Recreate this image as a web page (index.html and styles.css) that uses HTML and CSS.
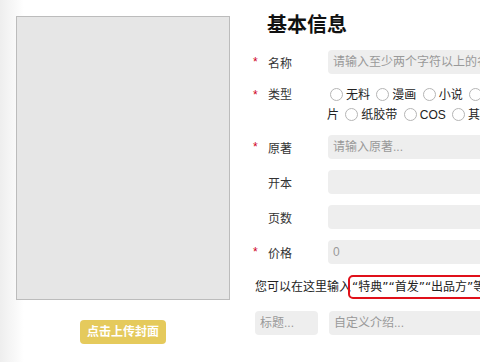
FILE: index.html
```html
<!DOCTYPE html>
<html lang="zh-CN">
<head>
    <meta charset="UTF-8">
    <meta name="viewport" content="width=device-width, initial-scale=1.0">
    <title>基本信息</title>
    <link rel="stylesheet" href="styles.css">
</head>
<body>

    <div class="page">
        <div class="cover-col">
            <div class="cover"></div>
            <div class="upload-btn">点击上传封面</div>
        </div>

        <div class="info">
            <h1 class="title">基本信息</h1>

            <div class="row">
                <span class="star">*</span>
                <span class="label">名称</span>
                <input class="field" type="text" placeholder="请输入至少两个字符以上的名称">
            </div>

            <div class="row row-types">
                <span class="star">*</span>
                <span class="label">类型</span>
                <div class="types">
                    <label><input type="radio" name="type">无料</label>
                    <label><input type="radio" name="type">漫画</label>
                    <label><input type="radio" name="type">小说</label>
                    <label><input type="radio" name="type">画集</label>
                    <label><input type="radio" name="type">明信片</label>
                    <label><input type="radio" name="type">纸胶带</label>
                    <label><input type="radio" name="type">COS</label>
                    <label><input type="radio" name="type">其他</label>
                </div>
            </div>

            <div class="row">
                <span class="star">*</span>
                <span class="label">原著</span>
                <input class="field" type="text" placeholder="请输入原著...">
            </div>

            <div class="row">
                <span class="star"></span>
                <span class="label">开本</span>
                <input class="field" type="text">
            </div>

            <div class="row">
                <span class="star"></span>
                <span class="label">页数</span>
                <input class="field" type="text">
            </div>

            <div class="row">
                <span class="star">*</span>
                <span class="label">价格</span>
                <input class="field" type="text" placeholder="0">
            </div>

            <div class="note">您可以在这里输入<span class="mark">“特典”“首发”“出品方”等信息</span></div>

            <div class="extra">
                <input class="field extra-title" type="text" placeholder="标题...">
                <input class="field" type="text" placeholder="自定义介绍...">
            </div>
        </div>
    </div>

</body>
</html>
```

FILE: styles.css
```css
body {
    margin: 0;
    background: linear-gradient(to right, #eeeeee, #ffffff 24px);
    font-family: "Liberation Sans", "Noto Sans CJK SC", sans-serif;
    font-size: 12px;
    color: #222;
}
.page {
    display: flex;
    height: 362px;
    overflow: hidden;
}
.cover-col {
    display: flex;
    flex-direction: column;
    align-items: center;
    flex-shrink: 0;
    margin: 16px 0 0 16px;
    width: 214px;
}
.cover {
    width: 100%;
    height: 284px;
    box-sizing: border-box;
    border: 1px solid #bcbcbc;
    background-color: #e6e6e6;
}
.upload-btn {
    margin-top: 20px;
    width: 86px;
    height: 24px;
    line-height: 24px;
    border-radius: 4px;
    background-color: #e5ca5c;
    color: #fff;
    font-weight: bold;
    text-align: center;
}
.info {
    flex-shrink: 0;
    width: 420px;
    margin-left: 23px;
    padding-top: 13px;
}
.title {
    margin: 0 0 13px 14px;
    font-size: 20px;
    line-height: 24px;
    color: #111;
}
.row {
    display: flex;
    align-items: center;
    height: 24px;
    margin-bottom: 11px;
}
.star {
    width: 15px;
    color: #d0021b;
    font-size: 12px;
}
.label {
    width: 60px;
    color: #333;
}
.field {
    flex: 1;
    height: 24px;
    box-sizing: border-box;
    border: none;
    border-radius: 4px;
    padding: 0 5px;
    background-color: #eeeeee;
    font-family: inherit;
    font-size: 12px;
    color: #888;
    outline: none;
}
.field::placeholder {
    color: #999;
}
.row-types {
    align-items: flex-start;
    height: 40px;
    margin-bottom: 10px;
}
.row-types .star,
.row-types .label {
    line-height: 20px;
}
.types {
    width: 234px;
    margin-left: -1px;
    line-height: 20px;
    color: #222;
}
.types input {
    appearance: none;
    width: 13px;
    height: 13px;
    margin: 0 3px;
    border: 1px solid #b5b5b5;
    border-radius: 50%;
    background-color: #fff;
    vertical-align: -2px;
    box-sizing: border-box;
}
.note {
    margin: 9px 0 0 2px;
    height: 24px;
    line-height: 24px;
    white-space: nowrap;
    color: #222;
}
.mark {
    display: inline-block;
    margin-left: -3px;
    padding: 0 2px;
    line-height: 20px;
    border: 2px solid #e0101a;
    border-radius: 5px;
    font-family: "DejaVu Sans", "Noto Sans CJK SC", sans-serif;
}
.extra {
    display: flex;
    gap: 11px;
    margin: 12px 0 0 2px;
}
.extra-title {
    flex: none;
    width: 63px;
}
```
